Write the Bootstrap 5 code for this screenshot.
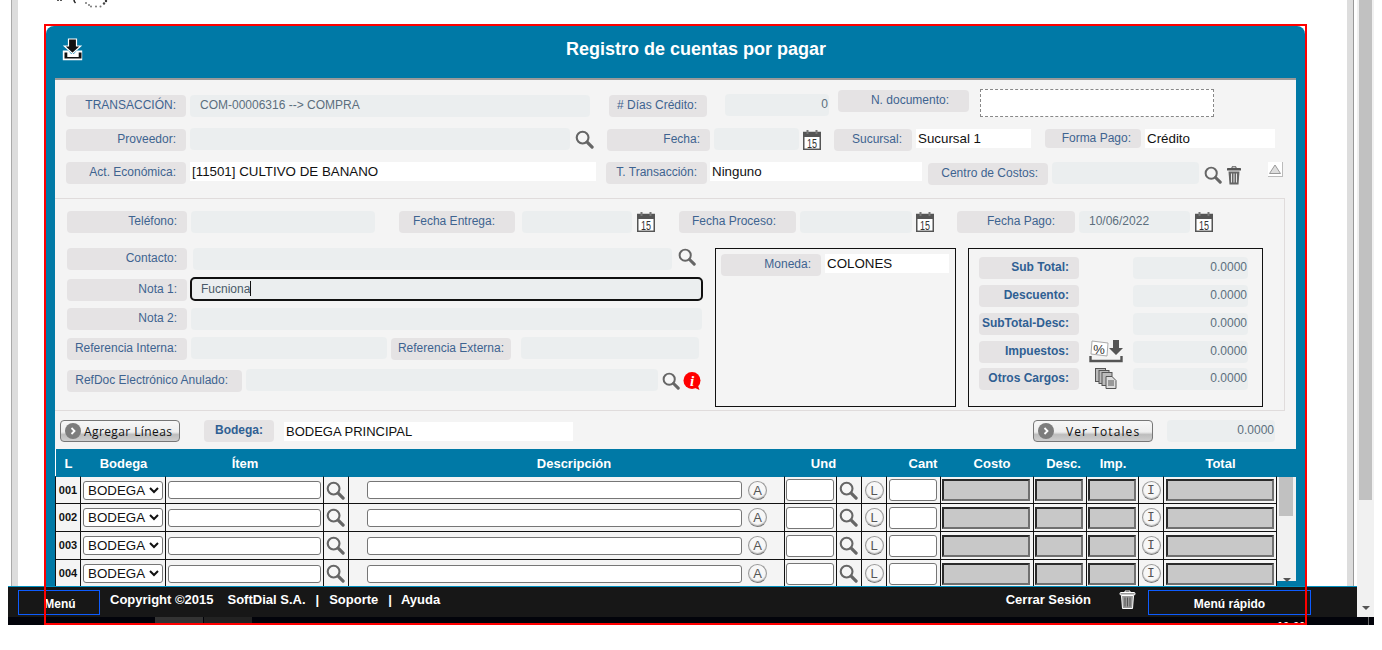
<!DOCTYPE html>
<html lang="es">

<head>
    <meta charset="UTF-8">
    <meta name="viewport" content="width=device-width, initial-scale=1.0">
    <title>Registro de cuentas por pagar</title>
    <link href="https://cdn.jsdelivr.net/npm/bootstrap@5.3.0/dist/css/bootstrap.min.css" rel="stylesheet">
    <style>
        body {
            margin: 0;
            height: 650px;
            overflow: hidden;
            background: #fff;
            font-family: "Liberation Sans", Arial, sans-serif;
            font-size: 12px;
        }

        .shell { width: 1366px; height: 625px; margin-left: 8px; }
        .upper { height: 617px; }
        .sheet-wrap { width: 1349px; height: 617px; padding-left: 3px; padding-right: 3px; }
        .paper { height: 617px; border-left: 1px solid #aaa; border-right: 1px solid #999; }
        .gutter { height: 617px; border-left: 6px solid #ddd; border-right: 6px solid #ddd; padding-left: 28px; }
        .spin-line { height: 26px; padding-left: 9px; }
        .spin-line svg { display: block; }

        .panel { width: 1259px; height: 640px; background: #0079a6; border-radius: 8px 8px 0 0; }
        .panel-head { height: 52px; padding-left: 16px; padding-bottom: 6px; }
        .panel-title { font-size: 18px; font-weight: bold; color: #fff; margin-left: 482px; }
        .form-zone { margin: 0 9px; height: 371px; padding-top: 9px; background: #f4f4f4; border-top: 2px solid #999; }

        .line { padding-left: 11px; align-items: flex-start; }
        .r39 { height: 39px; }
        .r34 { height: 34px; }
        .r36 { height: 36px; }
        .r29 { height: 29px; }
        .r31 { height: 31px; }
        .r32 { height: 32px; }
        .r38 { height: 38px; padding-top: 9px; padding-left: 5px; }

        .lbl {
            flex: none;
            height: 22px;
            line-height: 20px;
            padding-right: 10px;
            text-align: right;
            white-space: nowrap;
            background: #e5e3e4;
            border-radius: 4px;
            color: #3e6390;
        }
        .lbl-b { font-weight: bold; color: #2f5f93; }
        .pr20 { padding-right: 20px; }
        .pr7 { padding-right: 7px; }
        .pr14 { padding-right: 14px; }
        .h19 { height: 19px; line-height: 18px; }

        .fld {
            flex: none;
            height: 22px;
            line-height: 21px;
            padding: 0 1px 0 10px;
            background: #ebeeef;
            border-radius: 4px;
            color: #5c6e7d;
            white-space: nowrap;
        }
        .wfld {
            flex: none;
            height: 19px;
            line-height: 20px;
            padding-left: 2px;
            background: #fff;
            color: #111;
            font-size: 13.33px;
            white-space: nowrap;
        }
        .wfld-s { font-size: 13px; }
        .docbox { flex: none; height: 28px; background: #fff; border: 1px dashed #888; }
        .focusbox { flex: none; height: 24px; line-height: 21px; padding-left: 9px; background: #ebeeef; border: 2px solid #111; border-radius: 5px; color: #4a5a68; }
        .caret-bar { display: inline-block; width: 1px; height: 15px; background: #111; vertical-align: -3px; }
        .ico { flex: none; display: block; }
        .tri-box { flex: none; width: 15px; height: 15px; background: #fff; border-right: 1px solid #bbb; border-bottom: 1px solid #bbb; }

        .w70 { width: 70px; } .w78 { width: 78px; } .w85 { width: 85px; }
        .w96 { width: 96px; } .w98 { width: 98px; } .w100 { width: 100px; } .w101 { width: 101px; } .w103 { width: 103px; }
        .w104 { width: 104px; } .w108 { width: 108px; } .w110 { width: 110px; } .w111 { width: 111px; } .w112 { width: 112px; }
        .w115 { width: 115px; } .w116 { width: 116px; } .w117 { width: 117px; } .w118 { width: 118px; } .w120 { width: 120px; }
        .w124 { width: 124px; } .w130 { width: 130px; } .w131 { width: 131px; } .w147 { width: 147px; } .w175 { width: 175px; }
        .w178 { width: 178px; } .w184 { width: 184px; } .w196 { width: 196px; } .w212 { width: 212px; } .w234 { width: 234px; }
        .w289 { width: 289px; } .w380 { width: 380px; } .w400 { width: 400px; } .w406 { width: 406px; } .w412 { width: 412px; }
        .w479 { width: 479px; } .w511 { width: 511px; } .w513 { width: 513px; }

        .ml3 { margin-left: 3px; } .ml4 { margin-left: 4px; } .ml5 { margin-left: 5px; } .ml6 { margin-left: 6px; }
        .ml7 { margin-left: 7px; } .ml9 { margin-left: 9px; } .ml10 { margin-left: 10px; } .ml11 { margin-left: 11px; }
        .ml13 { margin-left: 13px; } .ml14 { margin-left: 14px; } .ml18 { margin-left: 18px; } .ml19 { margin-left: 19px; }
        .ml23 { margin-left: 23px; } .ml24 { margin-left: 24px; } .ml26 { margin-left: 26px; } .ml460 { margin-left: 460px; }

        .dy1 { margin-top: 1px; } .dy2 { margin-top: 2px; } .dy3 { margin-top: 3px; } .dy4 { margin-top: 4px; }
        .dy5 { margin-top: 5px; } .dy6 { margin-top: 6px; }

        .inner-box { width: 1230px; height: 213px; padding-top: 12px; border-top: 1px solid #e0dcdc; border-right: 1px solid #e0dcdc; border-bottom: 1px solid #e0dcdc; }
        .top-line { height: 37px; padding-left: 12px; }
        .lower { padding-left: 12px; }
        .left-side { width: 636px; }
        .left-side .line { padding-left: 0; }
        .money-box { flex: none; width: 241px; height: 159px; margin-left: 12px; padding: 5px; border: 1px solid #111; }
        .sum-box { flex: none; width: 295px; height: 159px; margin-left: 12px; padding: 8px 9px 8px 10px; border: 1px solid #111; }
        .sum-row { height: 28px; }
        .sum-row-s { height: 27px; }
        .sum-ico { flex: none; width: 54px; }
        .up1 { margin-top: -1px; }

        .act-btn {
            flex: none;
            width: 120px;
            height: 22px;
            padding: 0 0 0 2px;
            border: 1px solid #777;
            border-radius: 3px;
            background: linear-gradient(#f7f7f7 0, #eee 55%, #bdbdbd 68%, #cfcfcf 100%);
            font-family: "Open Sans", sans-serif;
            font-size: 12px;
            letter-spacing: .4px;
            color: #111;
            line-height: 20px;
        }
        .act-btn:hover { border-color: #777; color: #111; }
        .btn-dot { width: 20px; height: 20px; }
        .add-txt { margin: 2px 0 0 1px; }
        .ver-txt { margin: 2px 0 0 10px; letter-spacing: 1.1px; }

        .grid-zone { margin: 0 9px; }
        .lines-grid { width: 1222px; table-layout: fixed; border-collapse: separate; border-spacing: 0; }
        .lines-grid th {
            height: 27px;
            padding: 2px 0 0;
            background: #0079a6;
            color: #fff;
            font-size: 13px;
            text-align: center;
        }
        .lines-grid th:first-child { border-left: 1px solid #fff; }
        .lines-grid td {
            height: 28px;
            padding: 0;
            background: #f4f4f4;
            border-right: 1px solid #111;
            border-bottom: 1px solid #111;
        }
        .lines-grid td:first-child { border-left: 1px solid #111; }
        .lines-grid tbody tr:first-child td { border-top: 1px solid #0079a6; }
        .lines-grid tbody tr:first-child .cell-in { height: 26px; }
        .cell-in { height: 27px; display: flex; align-items: center; justify-content: center; }
        .cell-num { font-size: 11px; font-weight: bold; color: #111; }
        .pl14 { padding-left: 14px !important; }
        .pl18 { padding-left: 18px !important; }
        .pl9 { padding-left: 9px !important; }
        .pl6 { padding-left: 6px !important; }

        .row-sel { width: 80px; height: 19px; padding: 0; font-size: 13.33px; font-family: "Liberation Sans", Arial, sans-serif; border: 1px solid #767676; border-radius: 3px; background-color: #fff; color: #111; }
        .row-txt { display: block; height: 18px; padding: 0; background: #fff; border: 1px solid #767676; border-radius: 3px; }
        .row-tall { height: 22px; width: 48px; margin-right: 2px; }
        .txt-item { width: 153px; }
        .txt-desc { width: 375px; }
        .row-off { display: block; height: 22px; background: #c8c8c8; border: 2px solid #707070; border-top-color: #2b2b2b; border-left-color: #2b2b2b; }
        .off-88 { width: 88px; margin-right: 2px; }
        .off-48 { width: 48px; margin-right: 2px; }
        .off-108 { width: 108px; }
        .desc-in { justify-content: flex-start; padding-left: 18px; }
        .lens-cell { margin-right: 1px; }
        .round-mark {
            flex: none;
            width: 19px;
            height: 19px;
            line-height: 17px;
            text-align: center;
            border: 1px solid #999;
            border-bottom-color: #777;
            border-radius: 50%;
            background: #f7f7f7;
            box-shadow: inset 0 -1px 1px #bbb;
            color: #555;
            font-size: 13px;
        }
        .mark-slab { font-family: "Liberation Mono", monospace; }
        .inner-track { flex: none; width: 19px; height: 104px; margin-top: 28px; padding-left: 2px; background: #f1f1f1; }
        .track-thumb { width: 14px; height: 39px; background: #c1c1c1; }
        .track-down { margin: 62px 0 0 4px; display: block; }

        .page-bar { flex: none; width: 17px; height: 617px; background: #f1f1f1; padding-left: 2px; }
        .page-thumb { width: 13px; height: 500px; background: #c1c1c1; }
        .page-down { display: block; margin: 106px 0 0 3px; }

        .foot-bar {
            position: absolute;
            left: 0;
            bottom: 0;
            width: 1349px;
            height: 31px;
            background: #171717;
            border-top: 1px solid #0090c0;
            color: #fff;
            font-weight: bold;
        }
        .foot-box { flex: none; height: 25px; line-height: 26px; margin-top: 3px; border: 1px solid #0d5cff; text-align: center; }
        .box-menu { width: 82px; margin-left: 10px; padding-left: 2px; }
        .box-quick { width: 163px; margin-left: 12px; margin-right: 46px; }
        .foot-links { margin-left: 10px; margin-top: 5px; line-height: 16px; font-size: 13px; }
        .gap14 { margin-left: 14px; }
        .gap9 { margin-left: 9px; }
        .foot-out { margin-top: 5px; line-height: 16px; font-size: 13px; }
        .foot-trash { margin: 3px 0 0 28px; }

        .task-strip { height: 8px; background: #02030a; padding-left: 147px; }
        .task-a { width: 48px; height: 8px; background: #333; }
        .task-b { width: 48px; height: 8px; margin-left: 1px; background: #222; }
        .task-clock { margin-left: 1025px; width: 30px; height: 8px; overflow: hidden; color: #fff; font-size: 11px; font-weight: bold; line-height: 18px; }
        .task-edge { width: 1px; height: 8px; margin-left: 61px; background: #666; }

        .red-frame { position: absolute; left: 36px; top: 24px; width: 1263px; height: 601px; border: 2px solid #f00; pointer-events: none; }
    </style>
</head>

<body>
    <svg class="d-none">
        <symbol id="i-search" viewBox="0 0 20 20">
            <circle cx="8" cy="8" r="6.200" fill="#f6f6f6" stroke="#666" stroke-width="2.200" />
            <path d="M12.800 12.800 18 18" stroke="#666" stroke-width="3.400" stroke-linecap="round" />
        </symbol>
        <symbol id="i-cal" viewBox="0 0 18 20">
            <rect x=".75" y="2.500" width="16.500" height="16.800" fill="#fff" stroke="#555" stroke-width="1.500" />
            <rect x="1" y="2.500" width="16" height="4.500" fill="#555" />
            <path d="M4.500 0v4M13.500 0v4" stroke="#777" stroke-width="2" />
            <text x="9" y="18" font-family="Liberation Sans" font-size="12" text-anchor="middle" textLength="10" lengthAdjust="spacingAndGlyphs" fill="#333">15</text>
        </symbol>
        <symbol id="i-trash" viewBox="0 0 16 19">
            <path d="M6 2V.8h4V2" fill="none" stroke="#555" />
            <rect x="1" y="2" width="14" height="2.600" rx=".6" fill="#555" />
            <path d="M2.500 5.500h11l-1 13h-9z" fill="#666" />
            <path d="M5.500 7.500v9M8 7.500v9M10.500 7.500v9" stroke="#f4f4f4" stroke-width=".9" />
        </symbol>
        <symbol id="i-down" viewBox="0 0 22 23">
            <path d="M6.500 1h8v7h4.200L10.500 15.500 2.300 8h4.200z" fill="#111" stroke="#fff" stroke-width="1.200" />
            <path d="M.8 12.500h5.400l3 3.500h2.600l3-3.500h5.400v9.700H.8z" fill="#fff" />
            <path d="M2.500 14.500h2.800v4.500h11.400v-4.500h2.800v6H2.500z" fill="#111" />
        </symbol>
        <symbol id="i-info" viewBox="0 0 18 18">
            <path d="M10 15l6.500 3-2.500-7z" fill="#e00" />
            <circle cx="9" cy="8.500" r="8.500" fill="#f00" />
            <text x="9" y="14" font-family="Liberation Serif" font-size="15" font-weight="bold" font-style="italic" text-anchor="middle" fill="#fff">i</text>
        </symbol>
        <symbol id="i-go" viewBox="0 0 20 20">
            <circle cx="10" cy="10" r="8" fill="#7d7d7d" />
            <path d="M8.500 7 11.500 10 8.500 13" fill="none" stroke="#fff" stroke-width="1.800" />
        </symbol>
    </svg>

    <div class="shell position-relative overflow-hidden">
        <div class="upper d-flex">
            <div class="sheet-wrap position-relative overflow-hidden">
                <div class="paper">
                    <div class="gutter">
                        <div class="spin-line">
                            <svg width="56" height="9">
                                <path d="M2 0h2M5 0h2" stroke="#222" stroke-width="1.500" />
                                <path d="M19 0c0 1 .5 2 1.500 3" stroke="#222" stroke-width="1.500" fill="none" />
                                <g fill="#777">
                                    <circle cx="31" cy="3" r="1" />
                                    <circle cx="34" cy="5" r="1" />
                                    <circle cx="36" cy="6.500" r="1" />
                                    <circle cx="41" cy="6.500" r="1" />
                                    <circle cx="45.500" cy="6.500" r="1" />
                                    <circle cx="49" cy="3.500" r="1.200" fill="#444" />
                                    <circle cx="51" cy="1" r="1.200" fill="#333" />
                                </g>
                            </svg>
                        </div>
                        <div class="panel">
                            <div class="panel-head d-flex align-items-center">
                                <svg class="ico" width="22" height="23"><use href="#i-down" /></svg>
                                <div class="panel-title">Registro de cuentas por pagar</div>
                            </div>

                            <div class="form-zone">
                                <div class="line r39 d-flex">
                                    <div class="lbl w120 dy6">TRANSACCIÓN:</div>
                                    <div class="fld w400 ml4 dy6">COM-00006316 --&gt; COMPRA</div>
                                    <div class="lbl w98 ml19 dy6">#&nbsp;Días Crédito:</div>
                                    <div class="fld w104 ml18 dy5 text-end">0</div>
                                    <div class="lbl w131 ml9 dy1 pr20">N. documento:</div>
                                    <div class="docbox w234 ml11"></div>
                                </div>
                                <div class="line r34 d-flex">
                                    <div class="lbl w120 dy1">Proveedor:</div>
                                    <div class="fld w380 ml4"></div>
                                    <svg class="ico ml5 dy2" width="19" height="19"><use href="#i-search" /></svg>
                                    <div class="lbl w103 ml13 dy1">Fecha:</div>
                                    <div class="fld w85 ml4"></div>
                                    <svg class="ico ml4 dy2" width="18" height="20"><use href="#i-cal" /></svg>
                                    <div class="lbl w78 ml13 dy1">Sucursal:</div>
                                    <div class="wfld w115 ml4 dy1">Sucursal 1</div>
                                    <div class="lbl w96 ml14 dy1 h19">Forma Pago:</div>
                                    <div class="wfld w130 ml4 dy1">Crédito</div>
                                </div>
                                <div class="line r36 d-flex">
                                    <div class="lbl w120">Act. Económica:</div>
                                    <div class="wfld w406 ml4">[11501] CULTIVO DE BANANO</div>
                                    <div class="lbl w101 ml10">T. Transacción:</div>
                                    <div class="wfld w212 ml3">Ninguno</div>
                                    <div class="lbl w120 ml6 dy1">Centro de Costos:</div>
                                    <div class="fld w147 ml4"></div>
                                    <svg class="ico ml5 dy4" width="18" height="18"><use href="#i-search" /></svg>
                                    <svg class="ico ml4 dy4" width="16" height="19"><use href="#i-trash" /></svg>
                                    <div class="tri-box ml26">
                                        <svg class="ico" width="14" height="14"><path d="M7 3 12.500 11.500H1.500z" fill="#ddd" stroke="#999" /></svg>
                                    </div>
                                </div>

                                <div class="inner-box">
                                    <div class="line top-line d-flex">
                                        <div class="lbl w120">Teléfono:</div>
                                        <div class="fld w184 ml4"></div>
                                        <div class="lbl w116 ml24 pr20">Fecha Entrega:</div>
                                        <div class="fld w110 ml7"></div>
                                        <svg class="ico ml5 dy1" width="18" height="20"><use href="#i-cal" /></svg>
                                        <div class="lbl w117 ml24 pr20">Fecha Proceso:</div>
                                        <div class="fld w112 ml4"></div>
                                        <svg class="ico ml4 dy1" width="18" height="20"><use href="#i-cal" /></svg>
                                        <div class="lbl w118 ml23 pr20">Fecha Pago:</div>
                                        <div class="fld w111 ml4">10/06/2022</div>
                                        <svg class="ico ml5 dy1" width="18" height="20"><use href="#i-cal" /></svg>
                                    </div>
                                    <div class="lower d-flex">
                                        <div class="left-side flex-shrink-0">
                                            <div class="line r29 d-flex">
                                                <div class="lbl w120">Contacto:</div>
                                                <div class="fld w479 ml6"></div>
                                                <svg class="ico ml6" width="18" height="18"><use href="#i-search" /></svg>
                                            </div>
                                            <div class="line r31 d-flex">
                                                <div class="lbl w120 dy2">Nota 1:</div>
                                                <div class="focusbox w513 ml3">Fucniona<span class="caret-bar"></span></div>
                                            </div>
                                            <div class="line r29 d-flex">
                                                <div class="lbl w120">Nota 2:</div>
                                                <div class="fld w511 ml4"></div>
                                            </div>
                                            <div class="line r32 d-flex">
                                                <div class="lbl w120 dy1">Referencia Interna:</div>
                                                <div class="fld w196 ml4"></div>
                                                <div class="lbl w120 ml4 dy1 pr7">Referencia Externa:</div>
                                                <div class="fld w178 ml10"></div>
                                            </div>
                                            <div class="line d-flex">
                                                <div class="lbl w175 dy1 pr14">RefDoc Electrónico Anulado:</div>
                                                <div class="fld w412 ml4"></div>
                                                <svg class="ico ml4 dy3" width="18" height="18"><use href="#i-search" /></svg>
                                                <svg class="ico ml3 dy3" width="18" height="18"><use href="#i-info" /></svg>
                                            </div>
                                        </div>
                                        <div class="money-box d-flex align-items-start">
                                            <div class="lbl w100">Moneda:</div>
                                            <div class="wfld w124 ml4">COLONES</div>
                                        </div>
                                        <div class="sum-box">
                                            <div class="sum-row d-flex">
                                                <div class="lbl lbl-b w100">Sub Total:</div>
                                                <div class="sum-ico"></div>
                                                <div class="fld w115 text-end">0.0000</div>
                                            </div>
                                            <div class="sum-row d-flex">
                                                <div class="lbl lbl-b w100">Descuento:</div>
                                                <div class="sum-ico"></div>
                                                <div class="fld w115 text-end">0.0000</div>
                                            </div>
                                            <div class="sum-row d-flex">
                                                <div class="lbl lbl-b w100">SubTotal-Desc:</div>
                                                <div class="sum-ico"></div>
                                                <div class="fld w115 text-end">0.0000</div>
                                            </div>
                                            <div class="sum-row-s d-flex">
                                                <div class="lbl lbl-b w100">Impuestos:</div>
                                                <div class="sum-ico d-flex justify-content-center">
                                                    <svg class="ico up1" width="34" height="23">
                                                        <path d="M3 1 19 3 18 16 2 14z" fill="#fff" stroke="#aaa" />
                                                        <text x="10" y="13.500" font-family="Liberation Sans" font-size="13" text-anchor="middle" fill="#333">%</text>
                                                        <path d="M24 0h6v8h4l-7 7-7-7h4z" fill="#555" />
                                                        <path d="M1.500 16v5h31v-5" fill="none" stroke="#555" stroke-width="2.400" />
                                                    </svg>
                                                </div>
                                                <div class="fld w115 text-end">0.0000</div>
                                            </div>
                                            <div class="sum-row d-flex">
                                                <div class="lbl lbl-b w100">Otros Cargos:</div>
                                                <div class="sum-ico d-flex justify-content-center">
                                                    <svg class="ico" width="22" height="21">
                                                        <g fill="#bbb" stroke="#555">
                                                            <rect x=".5" y=".5" width="10" height="13" />
                                                            <rect x="4" y="2.500" width="10" height="13" />
                                                            <rect x="7" y="4.500" width="10" height="13" />
                                                        </g>
                                                        <path d="M11 8.500h6l4 4v8H11z" fill="#ddd" stroke="#555" />
                                                        <path d="M13 13h6M13 15h6M13 17h6" stroke="#555" />
                                                    </svg>
                                                </div>
                                                <div class="fld w115 text-end">0.0000</div>
                                            </div>
                                        </div>
                                    </div>
                                </div>

                                <div class="line r38 d-flex">
                                    <button type="button" class="btn act-btn d-flex align-items-center rounded-1">
                                        <svg class="btn-dot flex-shrink-0" width="20" height="20"><use href="#i-go" /></svg>
                                        <span class="add-txt">Agregar Líneas</span>
                                    </button>
                                    <div class="lbl lbl-b w70 ml24 text-center px-0">Bodega:</div>
                                    <div class="wfld wfld-s w289 ml10 dy2">BODEGA PRINCIPAL</div>
                                    <button type="button" class="btn act-btn d-flex align-items-center rounded-1 ml460">
                                        <svg class="btn-dot flex-shrink-0" width="20" height="20"><use href="#i-go" /></svg>
                                        <span class="ver-txt">Ver Totales</span>
                                    </button>
                                    <div class="fld w108 ml14 text-end">0.0000</div>
                                </div>
                            </div>

                            <div class="grid-zone d-flex">
                                <table class="lines-grid flex-shrink-0">
                                    <colgroup>
                                        <col style="width:26px"><col style="width:85px"><col style="width:158px"><col style="width:25px"><col style="width:436px"><col style="width:52px"><col style="width:25px"><col style="width:25px"><col style="width:54px"><col style="width:93px"><col style="width:53px"><col style="width:52px"><col style="width:25px"><col style="width:113px">
                                    </colgroup>
                                    <thead>
                                        <tr>
                                            <th>L</th>
                                            <th>Bodega</th>
                                            <th>Ítem</th>
                                            <th></th>
                                            <th class="pl14">Descripción</th>
                                            <th colspan="2">Und</th>
                                            <th></th>
                                            <th class="pl18">Cant</th>
                                            <th class="pl9">Costo</th>
                                            <th class="pl6">Desc.</th>
                                            <th>Imp.</th>
                                            <th></th>
                                            <th>Total</th>
                                        </tr>
                                    </thead>
                                    <tbody id="grid-body"></tbody>
                                </table>
                                <div class="inner-track">
                                    <div class="track-thumb"></div>
                                    <svg class="track-down" width="8" height="4"><path d="M0 0h8L4 4z" fill="#555" /></svg>
                                </div>
                            </div>
                        </div>
                    </div>
                </div>

                <div class="foot-bar d-flex">
                    <div class="foot-box box-menu">Menú</div>
                    <div class="foot-links">Copyright ©2015</div>
                    <div class="foot-links gap14">SoftDial S.A.</div>
                    <div class="foot-links">|</div>
                    <div class="foot-links">Soporte</div>
                    <div class="foot-links">|</div>
                    <div class="foot-links gap9">Ayuda</div>
                    <div class="foot-out ms-auto">Cerrar Sesión</div>
                    <svg class="ico foot-trash" width="17" height="19" viewBox="0 0 17 19">
                        <path d="M6 2.500V1h5v1.500" fill="none" stroke="#fff" />
                        <rect x="1" y="2.500" width="15" height="2.500" rx="1" fill="#999" stroke="#fff" />
                        <path d="M2.500 5.500h12l-1 13h-10z" fill="#999" stroke="#fff" />
                        <path d="M6 7.500v9M8.500 7.500v9M11 7.500v9" stroke="#555" />
                    </svg>
                    <div class="foot-box box-quick">Menú rápido</div>
                </div>
            </div>

            <div class="page-bar">
                <div class="page-thumb"></div>
                <svg class="page-down" width="8" height="4"><path d="M0 0h8L4 4z" fill="#555" /></svg>
            </div>
        </div>

        <div class="task-strip d-flex">
            <div class="task-a"></div>
            <div class="task-b"></div>
            <div class="task-clock">10:06</div>
            <div class="task-edge"></div>
        </div>

        <div class="red-frame"></div>
    </div>

    <script src="https://cdn.jsdelivr.net/npm/bootstrap@5.3.0/dist/js/bootstrap.bundle.min.js"></script>
    <script>
        const circle = (letter, extra = '') => `<span class="round-mark ${extra}">${letter}</span>`;
        const lens = '<svg class="ico lens-cell" width="19" height="19"><use href="#i-search" /></svg>';

        // the form opens with empty lines, four of them are in view
        document.getElementById('grid-body').innerHTML = ['001', '002', '003', '004'].map(num => `
            <tr>
                <td><div class="cell-in cell-num">${num}</div></td>
                <td><div class="cell-in"><select class="row-sel"><option>BODEGA</option></select></div></td>
                <td><div class="cell-in"><input type="text" class="row-txt txt-item"></div></td>
                <td><div class="cell-in">${lens}</div></td>
                <td><div class="cell-in desc-in"><input type="text" class="row-txt txt-desc"><span class="ml6 d-flex">${circle('A')}</span></div></td>
                <td><div class="cell-in"><input type="text" class="row-txt row-tall"></div></td>
                <td><div class="cell-in">${lens}</div></td>
                <td><div class="cell-in">${circle('L')}</div></td>
                <td><div class="cell-in"><input type="text" class="row-txt row-tall"></div></td>
                <td><div class="cell-in"><input type="text" class="row-off off-88" disabled></div></td>
                <td><div class="cell-in"><input type="text" class="row-off off-48" disabled></div></td>
                <td><div class="cell-in"><input type="text" class="row-off off-48" disabled></div></td>
                <td><div class="cell-in">${circle('I', 'mark-slab')}</div></td>
                <td><div class="cell-in"><input type="text" class="row-off off-108" disabled></div></td>
            </tr>`).join('');
    </script>
</body>

</html>
